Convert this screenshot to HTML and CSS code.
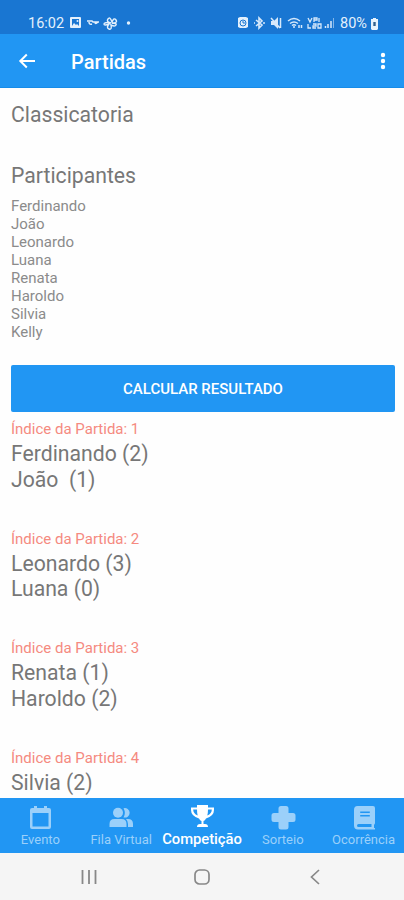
FILE: index.html
```html
<!DOCTYPE html>
<html lang="pt-BR">
<head>
<meta charset="utf-8">
<title>Partidas</title>
<link rel="stylesheet" href="styles.css">
</head>
<body>
<div class="status">
  <span class="clock">16:02</span>
  <svg class="status-left" width="66" height="14" viewBox="0 0 66 14" fill="none" stroke="#e3f0fc">
    <path fill="#e3f0fc" stroke="none" fill-rule="evenodd" d="M2 1h9q1 0 1 1v9q0 1-1 1H2q-1 0-1-1V2q0-1 1-1ZM3 3v7l2-3 2 2 1-1 2 2V3Z"/><circle cx="8.500" cy="5" r="1" fill="#e3f0fc" stroke="none"/>
    <path stroke-width="1.500" d="M18 5h5l1 1h6M20 6q0 3 3 2M26 6q0 3 3 0"/>
    <path stroke-width="1.400" d="M42 7q-5-1-3-4t4 3q2-5 4-2t-4 3q5 0 4 2t-5 0q1 5-2 4t0-5q-5 2-5 0t7-1"/>
    <circle cx="59.500" cy="7" r="1.700" fill="#e3f0fc" stroke="none"/>
  </svg>
  <svg class="status-right" width="100" height="14" viewBox="0 0 100 14" fill="none" stroke="#d7e9fb">
    <path fill="#e3f0fc" stroke="none" d="M1 2l2-1h6l2 1v9l-2 1H3l-2-1Z"/><circle cx="6" cy="7" r="3" stroke="#1976d2"/><path stroke="#1976d2" d="M6 5v2h2"/>
    <path stroke-width="1.600" d="m19 4 6 5-3 3V2l3 3-6 5M17 7h1M26 7h2"/>
    <path fill="#d7e9fb" stroke="none" d="M34 5h3l4-4v12l-4-4h-3Z"/><path stroke-width="1.500" d="m34 2 9 10M43.500 2v10"/>
    <path stroke-width="1.500" d="M51 5q6-5 12 0M53 7.500q4-3 8 0M55 9.500q2-1.500 4 0"/><path stroke-width="1.500" d="M57 10v2M62 9v3M64.500 9v3"/>
    <path stroke-width="1.300" d="m71 2 2 4 2-4M77 6V2h3v2h-3M82 2v4M71 8v4h3M76 8h3v2h-3v2h3M81 8v4h3V8Z"/>
    <path stroke-width="1.500" d="M88.500 10v2M91 8v4M94 5v7"/><path opacity=".55" d="M96.500 2v10"/>
  </svg>
  <span class="percent">80%</span>
  <svg class="battery" width="9" height="12" viewBox="0 0 9 12"><path fill="#e8f3fd" d="M3 0h3v1h2v10l-1 1H2l-1-1V1h2Z"/><path fill="#33618e" d="M3.300 4h2.400v4H3.300Z"/></svg>
</div>
<header class="toolbar">
  <svg class="back" width="18" height="18" viewBox="0 0 18 18"><path d="M17 9H2.500M8.800 2.500 2.300 9l6.500 6.500" fill="none" stroke="#fff" stroke-width="2"/></svg>
  <h1>Partidas</h1>
  <svg class="more" width="6" height="18" viewBox="0 0 6 18" fill="#fff"><circle cx="3" cy="3" r="2.200"/><circle cx="3" cy="9" r="2.200"/><circle cx="3" cy="15" r="2.200"/></svg>
</header>
<main>
  <h2 class="stage">Classicatoria</h2>
  <h2>Participantes</h2>
  <ul class="people">
    <li>Ferdinando</li><li>João</li><li>Leonardo</li><li>Luana</li><li>Renata</li><li>Haroldo</li><li>Silvia</li><li>Kelly</li>
  </ul>
  <button class="calc">CALCULAR RESULTADO</button>
  <section class="match"><h3>Índice da Partida: 1</h3><p>Ferdinando (2)</p><p>João&nbsp; (1)</p></section>
  <section class="match"><h3>Índice da Partida: 2</h3><p>Leonardo (3)</p><p>Luana (0)</p></section>
  <section class="match"><h3>Índice da Partida: 3</h3><p>Renata (1)</p><p>Haroldo (2)</p></section>
  <section class="match"><h3>Índice da Partida: 4</h3><p>Silvia (2)</p></section>
</main>
<nav class="tabs">
  <a class="tab"><svg width="26" height="26" viewBox="0 0 26 26"><path fill="currentColor" fill-rule="evenodd" d="M5 3h2V1h3v2h7V1h3v2h2q2 0 2 2v17q0 2-2 2H5q-2 0-2-2V5q0-2 2-2Zm.5 5v13.500h16V8Z"/></svg><span>Evento</span></a>
  <a class="tab"><svg width="26" height="26" viewBox="0 0 26 26" fill="currentColor"><circle cx="10" cy="7.800" r="5"/><path d="M15.500 3.200a4.800 4.800 0 1 1 0 9.200q2.700-4.400 0-9.200ZM1.500 22v-3q0-5 5-5h7q5 0 5 5v3ZM18 14h2q5 0 5 5v3h-5v-3q0-3-2-5Z"/></svg><span>Fila Virtual</span></a>
  <a class="tab active"><svg width="26" height="26" viewBox="0 0 26 26"><path fill="currentColor" fill-rule="evenodd" d="M8 0h11v2.500h6V5q0 6-8 8.500-1 2-2.500 2.500v3H16q3 0 3 3H8q0-3 3-3h1.500v-3q-1.500-.5-2.500-2.500Q2 11 2 5V2.500h6ZM4.200 4.500q0 4 4.500 6Q8 8 8 4.500ZM19 4.500q0 3.500-.7 6 4.500-2 4.500-6Z"/></svg><span>Competição</span></a>
  <a class="tab"><svg width="26" height="26" viewBox="0 0 26 26"><path fill="currentColor" d="M11 1h5q2.500 0 2.500 2.500V8H23q2.500 0 2.500 2.500v4Q25.500 17 23 17h-4.500v5q0 2.500-2.500 2.500h-5q-2.500 0-2.500-2.500v-5H4q-2.500 0-2.500-2.500v-4Q1.500 8 4 8h4.500V3.500Q8.500 1 11 1Z"/></svg><span>Sorteio</span></a>
  <a class="tab"><svg width="26" height="26" viewBox="0 0 26 26"><path fill="currentColor" fill-rule="evenodd" d="M6.500 1h15.500q2 0 2 2v15q0 1-1 1.700V23h1v1.500H7q-4 0-4-4V5q0-4 3.500-4Zm2.700 5.500V8h9.600V6.500Zm0 3.500v1.500h9.600V10ZM7.500 19q-1.500 0-1.500 1.500T7.500 22H20.500v-3Z"/></svg><span>Ocorrência</span></a>
</nav>
<footer class="system">
  <svg width="16" height="16" viewBox="0 0 16 16"><path d="M1.500 1v14M8 1v14M14.500 1v14" stroke="#888" stroke-width="1.800"/></svg>
  <svg width="18" height="18" viewBox="0 0 18 18"><rect x="2" y="2" width="14" height="14" rx="4.500" fill="none" stroke="#888" stroke-width="1.700"/></svg>
  <svg width="10" height="16" viewBox="0 0 10 16"><path d="M9 1 1.500 8 9 15" fill="none" stroke="#888" stroke-width="1.700"/></svg>
</footer>
</body>
</html>
```
FILE: styles.css
```css
* { box-sizing: border-box; }
body { margin: 0; width: 404px; height: 900px; overflow: hidden; display: flex; flex-direction: column; background: #fefefe; color: #777; font-family: Roboto, "Liberation Sans", sans-serif; }
h1, h2, h3, p, ul { margin: 0; padding: 0; }
svg { display: block; flex: none; }
.status { height: 34px; flex: none; background: #1976d2; color: #e3f0fc; display: flex; align-items: center; padding: 12px 25px 0 28px; font-size: 14.500px; }
.clock { width: 36px; margin-right: 5px; }
.status-right { margin-left: auto; margin-right: 3px; }
.percent { width: 29px; font-size: 14.500px; }
.battery { margin-left: 1px; margin-top: 2px; }
.toolbar { height: 54px; flex: none; background: #2196f3; color: #fff; display: flex; align-items: center; padding: 1px 18px 0; border-bottom: 1px solid #168ce9; }
.toolbar h1 { margin-left: 35px; font-size: 20px; font-weight: 500; line-height: 24px; padding-top: 1px; }
.more { margin-left: auto; }
main { height: 710px; flex: none; overflow: hidden; padding: 14px 9px 0 11px; }
h2 { font-size: 21.200px; font-weight: 400; line-height: 26px; }
.stage { margin-bottom: 35px; }
.people { list-style: none; margin-top: 8px; font-size: 15px; line-height: 18px; color: #8b8b8b; }
.calc { display: block; width: 384px; height: 47px; margin: 24px 0 8px; padding: 0; border: 0; border-radius: 2px; background: #2196f3; color: #fff; font: 500 15px Roboto, "Liberation Sans", sans-serif; }
.match { height: 109.500px; }
.match h3 { font-size: 15px; font-weight: 400; line-height: 18px; margin-bottom: 3px; color: #f58a80; }
.match p { font-size: 21.200px; line-height: 25.500px; }
.tabs { height: 55px; flex: none; display: grid; grid-template-columns: repeat(5, 1fr); background: #2196f3; }
.tab { display: flex; flex-direction: column; align-items: center; padding-top: 7px; color: #9bd0fa; font-size: 13px; line-height: 17px; white-space: nowrap; }
.tab.active { color: #fff; font-size: 14.800px; font-weight: 500; letter-spacing: -.05px; }
.system { flex: 1; background: #f5f5f5; display: flex; align-items: center; padding-left: 81px; }
.system svg:nth-child(2) { margin-left: 96px; }
.system svg:nth-child(3) { margin-left: 99px; }
```
